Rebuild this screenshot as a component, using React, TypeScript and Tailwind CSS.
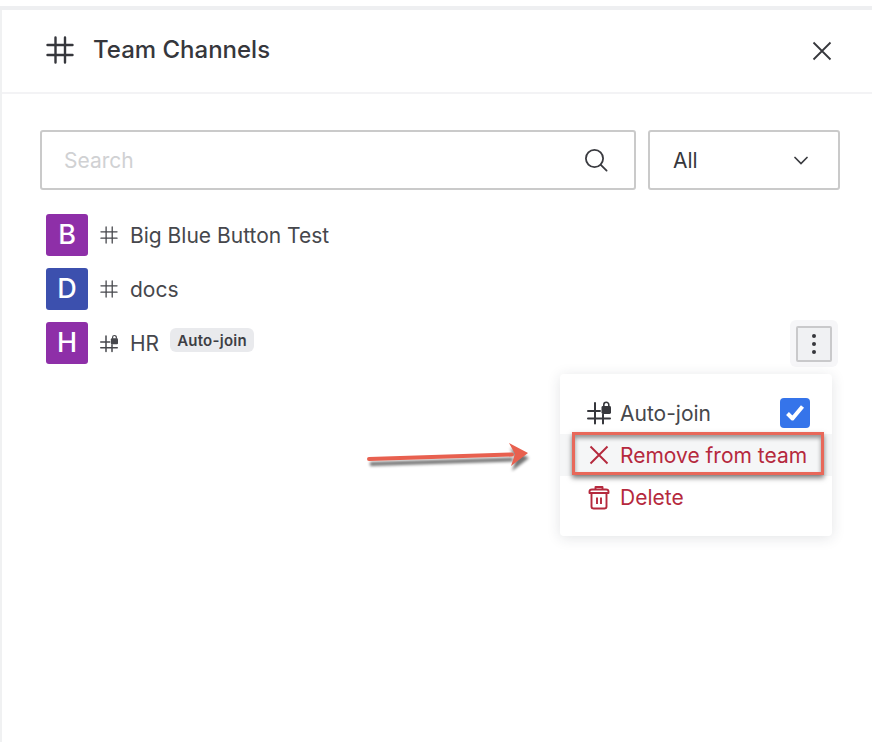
import React from "react";

const HashIcon = ({ className, size, weight = 2.4 }: { className?: string; size: number; weight?: number }) => (
  <svg width={size} height={size} viewBox="0 0 28 28" fill="none" stroke="currentColor" strokeWidth={weight} strokeLinecap="round" className={className}>
    <path d="M9.5 1.5V26.5M19 1.5V26.5M1.5 9H26.5M1.5 19H26.5" />
  </svg>
);

const HashLockIcon = ({ className, size }: { className?: string; size: number }) => (
  <svg width={size} height={size} viewBox="0 0 24 24" fill="none" className={className}>
    <path d="M8 2V22.5M16 13.5V22.5M1 10H13M1 17.5H23" stroke="currentColor" strokeWidth="2" strokeLinecap="round" />
    <rect x="14.5" y="5" width="9.5" height="8" rx="1.4" fill="currentColor" />
    <path d="M16.8 5.5V3.8a2.5 2.5 0 0 1 5 0v1.7" stroke="currentColor" strokeWidth="1.6" />
  </svg>
);

const Row = ({ letter, color, name, lock, badge }: { letter: string; color: string; name: string; lock?: boolean; badge?: boolean }) => (
  <div className="flex h-[42px] items-center">
    <div className={`flex h-[42px] w-[42px] items-center justify-center rounded-[3px] text-[27px] font-medium text-white ${color}`}>{letter}</div>
    <div className="ml-[12px] flex w-[18px] items-center justify-center text-[#46474c]">
      {lock ? <HashLockIcon size={19} /> : <HashIcon size={18} weight={2} />}
    </div>
    <span className="ml-[12px] translate-y-px text-[21px] leading-[26px] text-[#46474c]">{name}</span>
    {badge && (
      <span className="ml-[11px] flex h-[24px] -translate-y-[3px] items-center rounded-[6px] bg-[#e9eaed] px-[7px] text-[15px] font-semibold leading-none tracking-[0.25px] text-[#3d3e44]">Auto-join</span>
    )}
  </div>
);

export default function App() {
  return (
    <div className="relative h-[742px] w-[872px] overflow-hidden bg-white pt-[6px] [font-family:Inter,'Liberation_Sans',sans-serif]">
      <div className="h-[4px] bg-[#eeeff1]" />
      <div className="flex h-[calc(100%-4px)] flex-col border-l-2 border-[#f0f1f2]">
        <header className="flex h-[84px] shrink-0 items-center border-b-2 border-[#f3f3f5] pb-[2px] pl-[44px] pr-[40px]">
          <HashIcon size={28} className="text-[#36373c]" />
          <h1 className="ml-[19px] text-[24px] font-medium text-[#36373c]">Team Channels</h1>
          <svg width="20" height="20" viewBox="0 0 20 20" fill="none" stroke="#36373c" strokeWidth="1.8" className="ml-auto translate-y-px">
            <path d="M1.5 1.5L18.5 18.5M18.5 1.5L1.5 18.5" />
          </svg>
        </header>
        <div className="relative flex-1 pl-[38px] pr-[32px] pt-[36px]">
          <div className="flex gap-[12px]">
            <div className="flex h-[60px] flex-1 items-center rounded-[3px] border-2 border-[#cacaca] pl-[22px] pr-[26px]">
              <span className="flex-1 translate-y-px text-[21px] text-[#d0d1d3]">Search</span>
              <svg width="24" height="24" viewBox="0 0 24 24" fill="none" stroke="#3a3b40" strokeWidth="1.8" strokeLinecap="round">
                <circle cx="10.5" cy="10.5" r="8.6" />
                <path d="M16.8 16.8L22.6 22.6" />
              </svg>
            </div>
            <div className="flex h-[60px] w-[192px] items-center rounded-[3px] border-2 border-[#cacaca] pl-[23px] pr-[30px]">
              <span className="flex-1 translate-y-px text-[21px] text-[#36373c]">All</span>
              <svg width="14" height="9" viewBox="0 0 14 9" fill="none" stroke="#3a3b40" strokeWidth="1.7" strokeLinecap="round">
                <path d="M1 1.5L7 7.5L13 1.5" />
              </svg>
            </div>
          </div>
          <div className="mt-[24px] flex flex-col gap-[12px] pl-[6px]">
            <Row letter="B" color="bg-[#8e2fa8]" name="Big Blue Button Test" />
            <Row letter="D" color="bg-[#3c50ae]" name="docs" />
            <div className="flex items-start justify-between">
              <Row letter="H" color="bg-[#8e2fa8]" name="HR" lock badge />
              <div className="-mt-[2px] mr-[2px] flex h-[47px] w-[48px] items-center justify-center rounded-[6px] bg-[#f6f6f8]">
                <div className="flex h-[36px] w-[36px] flex-col items-center justify-center gap-[4px] rounded-[2px] border-2 border-[#c9c9cb] bg-[#f0f1f3]">
                  <i className="h-[4px] w-[4px] rounded-full bg-[#36373c]" />
                  <i className="h-[4px] w-[4px] rounded-full bg-[#36373c]" />
                  <i className="h-[4px] w-[4px] rounded-full bg-[#36373c]" />
                </div>
              </div>
            </div>
          </div>

          <div className="absolute left-[558px] top-[280px] w-[272px] rounded-[4px] bg-white py-[18px] shadow-[0_2px_14px_rgba(40,44,60,0.13)]">
            <div className="flex h-[42px] items-center pl-[27px] pr-[22px] text-[#46474c]">
              <HashLockIcon size={24} className="text-[#36373c]" />
              <span className="ml-[9px] flex-1 translate-y-px text-[21px]">Auto-join</span>
              <div className="flex h-[30px] w-[30px] items-center justify-center rounded-[4px] bg-[#3574ea]">
                <svg width="20" height="18" viewBox="0 0 20 18" fill="none" stroke="white" strokeWidth="4" strokeLinejoin="round">
                  <path d="M2.5 9.5L7.5 14.5L17.5 2.5" />
                </svg>
              </div>
            </div>
            <div className="flex h-[42px] items-center bg-[#f5f6f7] pl-[29px] text-[#b5293d]">
              <svg width="20" height="20" viewBox="0 0 20 20" fill="none" stroke="currentColor" strokeWidth="1.9">
                <path d="M1.5 1.5L18.5 18.5M18.5 1.5L1.5 18.5" />
              </svg>
              <span className="ml-[11px] translate-y-px text-[21px]">Remove from team</span>
            </div>
            <div className="flex h-[42px] items-center pl-[28px] text-[#b5293d]">
              <svg width="22" height="25" viewBox="0 0 22 25" fill="none" stroke="currentColor" strokeWidth="1.9" strokeLinejoin="round">
                <path d="M1.5 6.5C1.5 5 2.5 4.5 4 4.5H18C19.5 4.5 20.5 5 20.5 6.5V8H1.5Z" />
                <path d="M7.5 4.5V2H14.5V4.5" />
                <path d="M3.5 8V21.5C3.5 22.7 4.3 23.5 5.5 23.5H16.5C17.7 23.5 18.5 22.7 18.5 21.5V8" />
                <path d="M9 12.5V19M13 12.5V19" />
              </svg>
              <span className="ml-[10px] translate-y-px text-[21px]">Delete</span>
            </div>
          </div>

          <div className="pointer-events-none absolute left-[570px] top-[338px] h-[43px] w-[252px] border-[3px] border-[#e8685a] shadow-[0_3px_5px_rgba(0,0,0,0.5),inset_0_3px_4px_rgba(0,0,0,0.4)]" />

          <svg width="170" height="34" viewBox="0 0 170 34" className="pointer-events-none absolute left-[362px] top-[345px] overflow-visible" fill="none">
            <filter id="arrow-blur" x="-10%" y="-50%" width="120%" height="200%">
              <feGaussianBlur stdDeviation="1.6" />
            </filter>
            <g filter="url(#arrow-blur)" transform="translate(1 5)" opacity="0.55">
              <path d="M5 20L148 15.5" stroke="#000" strokeWidth="4" />
              <path d="M145 4L164 14L147 27L151 15Z" fill="#000" />
            </g>
            <path d="M5 20L148 15.5" stroke="#e8604f" strokeWidth="4" strokeLinecap="round" />
            <path d="M145 4L164 14L147 27L151 15Z" fill="#e8604f" />
          </svg>
        </div>
      </div>
    </div>
  );
}
